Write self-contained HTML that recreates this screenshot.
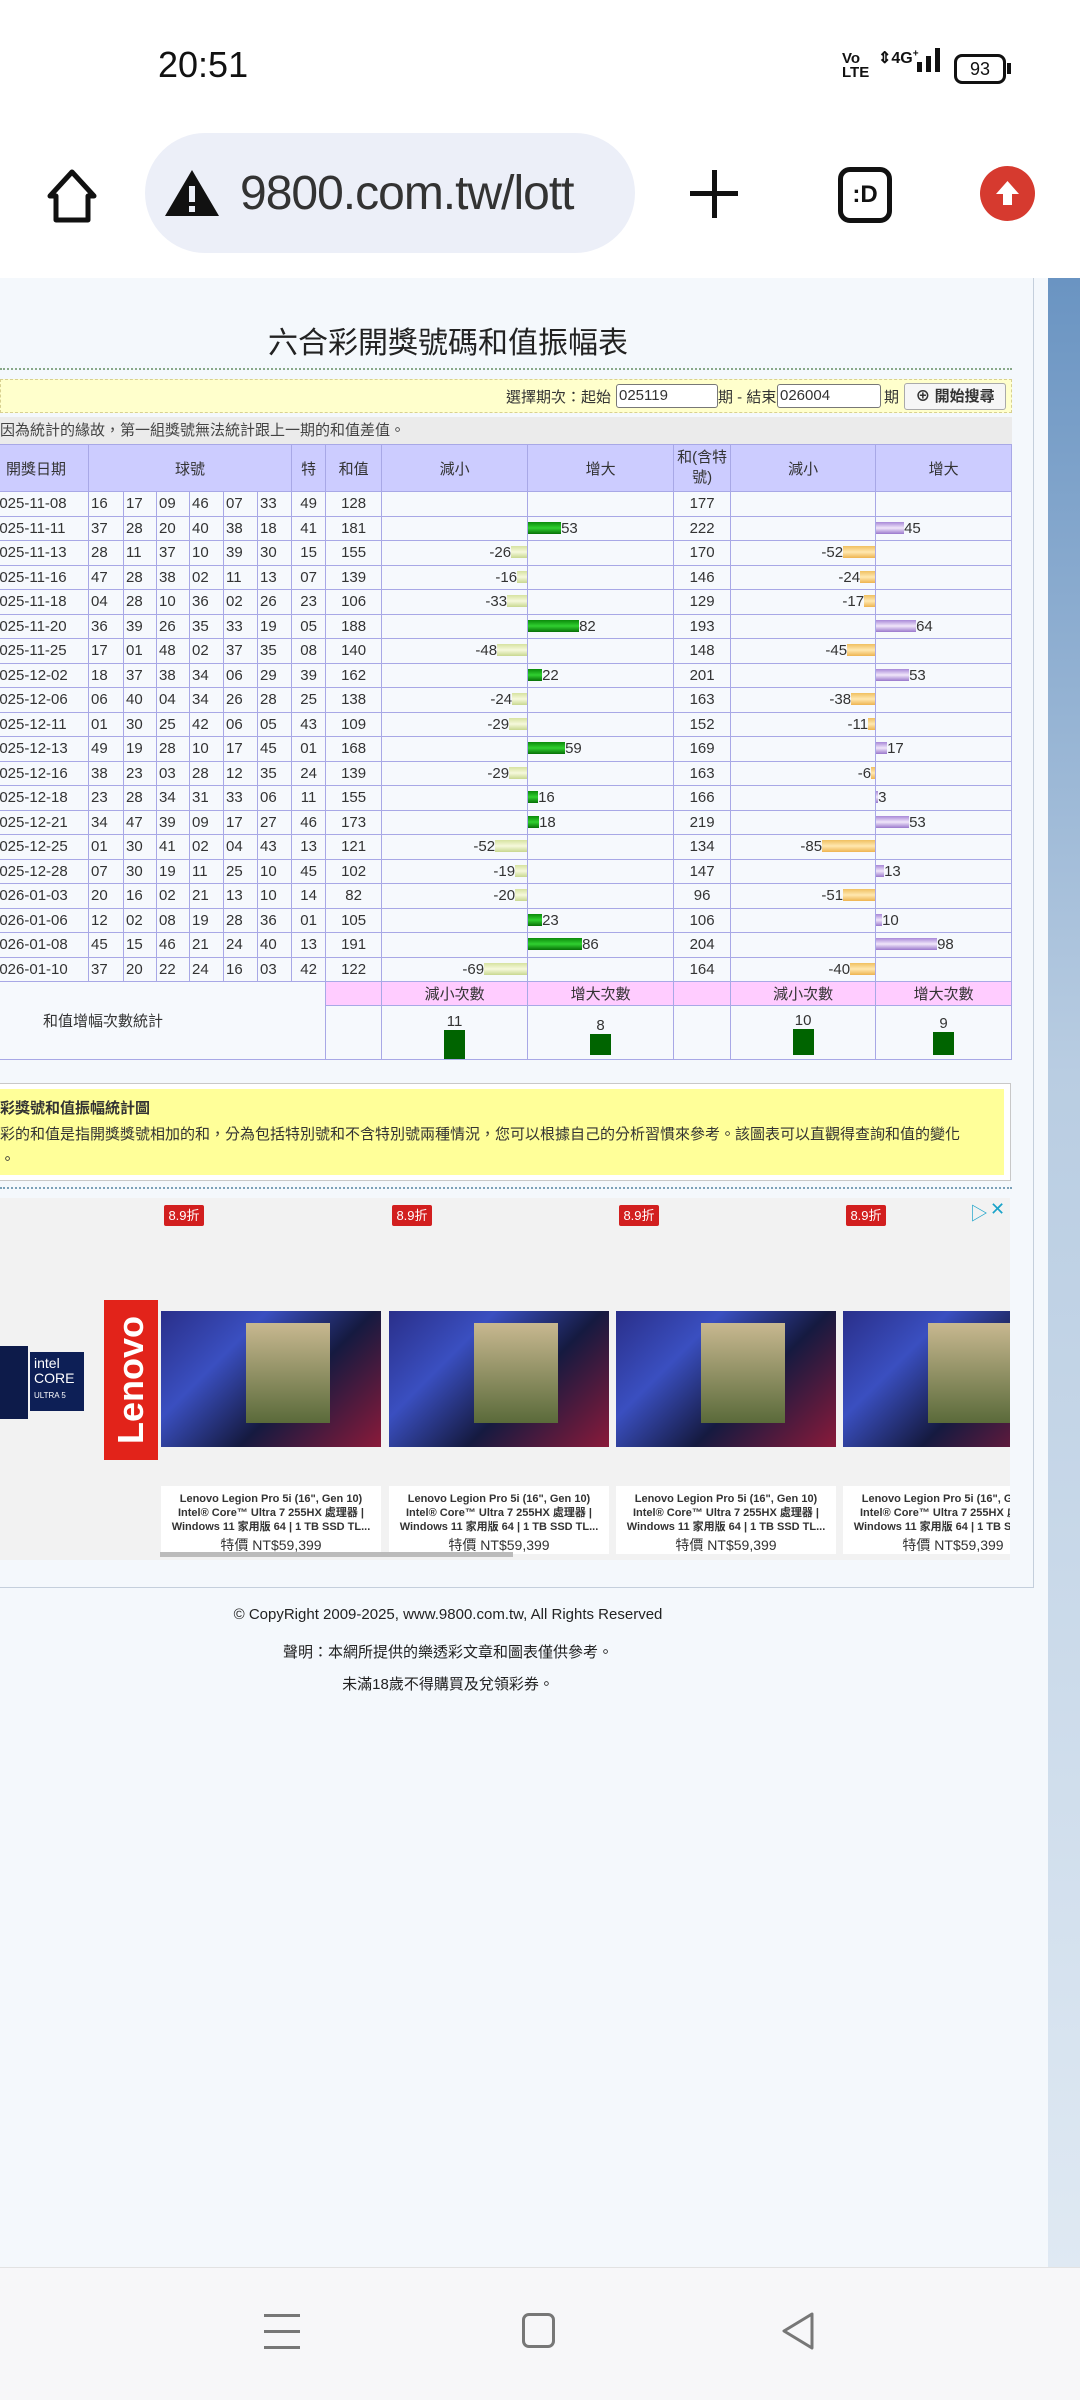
<!DOCTYPE html>
<html><head><meta charset="utf-8">
<style>
*{margin:0;padding:0;box-sizing:border-box}
body{width:1080px;height:2400px;position:relative;background:#fff;font-family:"Liberation Sans","Noto Sans CJK TC",sans-serif;overflow:hidden;color:#333}
.abs{position:absolute}
#page{position:absolute;left:0;top:278px;width:1080px;height:1989px;background:#f4f8fc}
#side{position:absolute;left:1048px;top:278px;width:32px;height:1989px;background:linear-gradient(#6a94c2,#b9cde2 40%,#dfe9f3)}
table{border-collapse:collapse;table-layout:fixed;position:absolute;left:-40px;top:444px;width:1051px;font-size:15px;color:#333}
td{border:1px solid #a8a8e6;text-align:center;white-space:nowrap;overflow:hidden;padding:0}
tr.h td{background:#ccccff;height:47px}
tr.r td{height:24.5px;background:#f6f9fd}
td.b{text-align:left;padding-left:2px}
td.dl{text-align:right;padding-right:0}
td.il{text-align:left}
.g,.y,.o,.p{display:inline-block;height:12px;vertical-align:-1px}
.g{background:linear-gradient(#0b8a0b,#30d030 50%,#067006)}
.y{background:linear-gradient(#d6e2a0,#f6f9dc 50%,#c8d890)}
.o{background:linear-gradient(#f0c060,#ffe8b0 50%,#eeb450)}
.p{background:linear-gradient(#a888d8,#f0e6fa 50%,#9a78cc)}
tr.sh td{background:#ffccff;height:24px}
tr.st td{height:54px;vertical-align:bottom;background:#f6f9fd}
.sb{display:inline-block;width:21px;background:#006400}
</style></head><body>
<!-- status bar -->
<div class="abs" style="left:158px;top:44px;font-size:36px;color:#111">20:51</div>
<div class="abs" style="left:842px;top:52px;font-size:15px;font-weight:bold;line-height:14px;color:#111">Vo<br>LTE</div>
<div class="abs" style="left:878px;top:48px;font-size:16px;font-weight:bold;color:#111">⇕4G<sup style="font-size:10px">+</sup></div>
<div class="abs" style="left:917px;top:62px;width:5px;height:10px;background:#111"></div>
<div class="abs" style="left:926px;top:56px;width:5px;height:16px;background:#111"></div>
<div class="abs" style="left:935px;top:48px;width:5px;height:24px;background:#111"></div>
<div class="abs" style="left:954px;top:54px;width:52px;height:30px;border:3px solid #111;border-radius:8px;font-size:18px;text-align:center;line-height:24px;color:#111">93</div>
<div class="abs" style="left:1007px;top:63px;width:4px;height:11px;background:#111"></div>
<!-- url bar -->
<svg class="abs" style="left:44px;top:168px" width="56" height="56" viewBox="0 0 56 56"><path d="M28 4 L6 28 L12 28 L12 52 L44 52 L44 28 L50 28 Z" fill="none" stroke="#111" stroke-width="5" stroke-linejoin="round"/></svg>
<div class="abs" style="left:145px;top:133px;width:490px;height:120px;border-radius:60px;background:#eceff8"></div>
<svg class="abs" style="left:163px;top:168px" width="58" height="50" viewBox="0 0 58 50"><path d="M29 2 L56 48 L2 48 Z" fill="#111"/><rect x="26" y="18" width="6" height="16" fill="#eceff8"/><rect x="26" y="38" width="6" height="6" fill="#eceff8"/></svg>
<div class="abs" style="left:240px;top:166px;font-size:48px;color:#333;letter-spacing:-1px">9800.com.tw/lott</div>
<div class="abs" style="left:690px;top:191px;width:48px;height:5px;background:#111"></div>
<div class="abs" style="left:712px;top:170px;width:5px;height:48px;background:#111"></div>
<div class="abs" style="left:838px;top:167px;width:54px;height:56px;border:5px solid #111;border-radius:12px;font-size:24px;font-weight:bold;text-align:center;line-height:46px;color:#111">:D</div>
<div class="abs" style="left:980px;top:166px;width:55px;height:55px;border-radius:50%;background:#d63a2f"></div>
<svg class="abs" style="left:990px;top:176px" width="35" height="35" viewBox="0 0 35 35"><path d="M17.5 5 L29 18 L22 18 L22 29 L13 29 L13 18 L6 18 Z" fill="#fff"/></svg>

<div id="page"></div>
<div id="side"></div>
<div class="abs" style="left:-2px;top:278px;width:1036px;height:1310px;border:1px solid #c4cfdc;border-top:none"></div>

<div class="abs" style="left:0;top:318px;width:896px;text-align:center;font-size:30px;color:#222">六合彩開獎號碼和值振幅表</div>
<div class="abs" style="left:0;top:368px;width:1012px;border-top:2px dotted #88a888"></div>
<div class="abs" style="left:0;top:379px;width:1012px;height:34px;background:#ffffcc;border:1px dashed #d8d090"></div>
<div class="abs" style="left:506px;top:386px;font-size:15px;color:#333;white-space:nowrap">選擇期次：起始</div>
<div class="abs" style="left:616px;top:384px;width:102px;height:24px;border:1px solid #777;border-radius:3px;background:#fff;font-size:15px;padding-left:2px;line-height:22px">025119</div>
<div class="abs" style="left:718px;top:386px;font-size:15px;color:#333">期 - 結束</div>
<div class="abs" style="left:777px;top:384px;width:104px;height:24px;border:1px solid #777;border-radius:3px;background:#fff;font-size:15px;padding-left:2px;line-height:22px">026004</div>
<div class="abs" style="left:884px;top:386px;font-size:15px;color:#333">期</div>
<div class="abs" style="left:904px;top:383px;width:102px;height:27px;border:1px solid #aaa;border-radius:3px;background:#f6f6f6;font-size:15px;font-weight:bold;text-align:center;line-height:25px">⊕ 開始搜尋</div>
<div class="abs" style="left:0;top:417px;width:1012px;height:27px;background:#ebebeb;font-size:15px;line-height:27px;color:#444">因為統計的緣故，第一組獎號無法統計跟上一期的和值差值。</div>

<table>
<colgroup><col style="width:128px"><col style="width:35px"><col style="width:33px"><col style="width:33px"><col style="width:34px"><col style="width:34px"><col style="width:34px"><col style="width:34px"><col style="width:56px"><col style="width:146px"><col style="width:146px"><col style="width:57px"><col style="width:145px"><col style="width:136px"></colgroup>
<tr class="h"><td style="text-align:right;padding-right:22px">開獎日期</td><td colspan="6">球號</td><td>特</td><td>和值</td><td>減小</td><td>增大</td><td style="white-space:normal;line-height:20px">和(含特號)</td><td>減小</td><td>增大</td></tr>
<tr class="r"><td class="b" style="padding-left:30px">2025-11-08</td><td class="b">16</td><td class="b">17</td><td class="b">09</td><td class="b">46</td><td class="b">07</td><td class="b">33</td><td>49</td><td>128</td><td></td><td></td><td>177</td><td></td><td></td></tr>
<tr class="r"><td class="b" style="padding-left:30px">2025-11-11</td><td class="b">37</td><td class="b">28</td><td class="b">20</td><td class="b">40</td><td class="b">38</td><td class="b">18</td><td>41</td><td>181</td><td></td><td class="il"><span class="g" style="width:33px"></span>53</td><td>222</td><td></td><td class="il"><span class="p" style="width:28px"></span>45</td></tr>
<tr class="r"><td class="b" style="padding-left:30px">2025-11-13</td><td class="b">28</td><td class="b">11</td><td class="b">37</td><td class="b">10</td><td class="b">39</td><td class="b">30</td><td>15</td><td>155</td><td class="dl">-26<span class="y" style="width:16px"></span></td><td></td><td>170</td><td class="dl">-52<span class="o" style="width:32px"></span></td><td></td></tr>
<tr class="r"><td class="b" style="padding-left:30px">2025-11-16</td><td class="b">47</td><td class="b">28</td><td class="b">38</td><td class="b">02</td><td class="b">11</td><td class="b">13</td><td>07</td><td>139</td><td class="dl">-16<span class="y" style="width:10px"></span></td><td></td><td>146</td><td class="dl">-24<span class="o" style="width:15px"></span></td><td></td></tr>
<tr class="r"><td class="b" style="padding-left:30px">2025-11-18</td><td class="b">04</td><td class="b">28</td><td class="b">10</td><td class="b">36</td><td class="b">02</td><td class="b">26</td><td>23</td><td>106</td><td class="dl">-33<span class="y" style="width:20px"></span></td><td></td><td>129</td><td class="dl">-17<span class="o" style="width:11px"></span></td><td></td></tr>
<tr class="r"><td class="b" style="padding-left:30px">2025-11-20</td><td class="b">36</td><td class="b">39</td><td class="b">26</td><td class="b">35</td><td class="b">33</td><td class="b">19</td><td>05</td><td>188</td><td></td><td class="il"><span class="g" style="width:51px"></span>82</td><td>193</td><td></td><td class="il"><span class="p" style="width:40px"></span>64</td></tr>
<tr class="r"><td class="b" style="padding-left:30px">2025-11-25</td><td class="b">17</td><td class="b">01</td><td class="b">48</td><td class="b">02</td><td class="b">37</td><td class="b">35</td><td>08</td><td>140</td><td class="dl">-48<span class="y" style="width:30px"></span></td><td></td><td>148</td><td class="dl">-45<span class="o" style="width:28px"></span></td><td></td></tr>
<tr class="r"><td class="b" style="padding-left:30px">2025-12-02</td><td class="b">18</td><td class="b">37</td><td class="b">38</td><td class="b">34</td><td class="b">06</td><td class="b">29</td><td>39</td><td>162</td><td></td><td class="il"><span class="g" style="width:14px"></span>22</td><td>201</td><td></td><td class="il"><span class="p" style="width:33px"></span>53</td></tr>
<tr class="r"><td class="b" style="padding-left:30px">2025-12-06</td><td class="b">06</td><td class="b">40</td><td class="b">04</td><td class="b">34</td><td class="b">26</td><td class="b">28</td><td>25</td><td>138</td><td class="dl">-24<span class="y" style="width:15px"></span></td><td></td><td>163</td><td class="dl">-38<span class="o" style="width:24px"></span></td><td></td></tr>
<tr class="r"><td class="b" style="padding-left:30px">2025-12-11</td><td class="b">01</td><td class="b">30</td><td class="b">25</td><td class="b">42</td><td class="b">06</td><td class="b">05</td><td>43</td><td>109</td><td class="dl">-29<span class="y" style="width:18px"></span></td><td></td><td>152</td><td class="dl">-11<span class="o" style="width:7px"></span></td><td></td></tr>
<tr class="r"><td class="b" style="padding-left:30px">2025-12-13</td><td class="b">49</td><td class="b">19</td><td class="b">28</td><td class="b">10</td><td class="b">17</td><td class="b">45</td><td>01</td><td>168</td><td></td><td class="il"><span class="g" style="width:37px"></span>59</td><td>169</td><td></td><td class="il"><span class="p" style="width:11px"></span>17</td></tr>
<tr class="r"><td class="b" style="padding-left:30px">2025-12-16</td><td class="b">38</td><td class="b">23</td><td class="b">03</td><td class="b">28</td><td class="b">12</td><td class="b">35</td><td>24</td><td>139</td><td class="dl">-29<span class="y" style="width:18px"></span></td><td></td><td>163</td><td class="dl">-6<span class="o" style="width:4px"></span></td><td></td></tr>
<tr class="r"><td class="b" style="padding-left:30px">2025-12-18</td><td class="b">23</td><td class="b">28</td><td class="b">34</td><td class="b">31</td><td class="b">33</td><td class="b">06</td><td>11</td><td>155</td><td></td><td class="il"><span class="g" style="width:10px"></span>16</td><td>166</td><td></td><td class="il"><span class="p" style="width:2px"></span>3</td></tr>
<tr class="r"><td class="b" style="padding-left:30px">2025-12-21</td><td class="b">34</td><td class="b">47</td><td class="b">39</td><td class="b">09</td><td class="b">17</td><td class="b">27</td><td>46</td><td>173</td><td></td><td class="il"><span class="g" style="width:11px"></span>18</td><td>219</td><td></td><td class="il"><span class="p" style="width:33px"></span>53</td></tr>
<tr class="r"><td class="b" style="padding-left:30px">2025-12-25</td><td class="b">01</td><td class="b">30</td><td class="b">41</td><td class="b">02</td><td class="b">04</td><td class="b">43</td><td>13</td><td>121</td><td class="dl">-52<span class="y" style="width:32px"></span></td><td></td><td>134</td><td class="dl">-85<span class="o" style="width:53px"></span></td><td></td></tr>
<tr class="r"><td class="b" style="padding-left:30px">2025-12-28</td><td class="b">07</td><td class="b">30</td><td class="b">19</td><td class="b">11</td><td class="b">25</td><td class="b">10</td><td>45</td><td>102</td><td class="dl">-19<span class="y" style="width:12px"></span></td><td></td><td>147</td><td></td><td class="il"><span class="p" style="width:8px"></span>13</td></tr>
<tr class="r"><td class="b" style="padding-left:30px">2026-01-03</td><td class="b">20</td><td class="b">16</td><td class="b">02</td><td class="b">21</td><td class="b">13</td><td class="b">10</td><td>14</td><td>82</td><td class="dl">-20<span class="y" style="width:12px"></span></td><td></td><td>96</td><td class="dl">-51<span class="o" style="width:32px"></span></td><td></td></tr>
<tr class="r"><td class="b" style="padding-left:30px">2026-01-06</td><td class="b">12</td><td class="b">02</td><td class="b">08</td><td class="b">19</td><td class="b">28</td><td class="b">36</td><td>01</td><td>105</td><td></td><td class="il"><span class="g" style="width:14px"></span>23</td><td>106</td><td></td><td class="il"><span class="p" style="width:6px"></span>10</td></tr>
<tr class="r"><td class="b" style="padding-left:30px">2026-01-08</td><td class="b">45</td><td class="b">15</td><td class="b">46</td><td class="b">21</td><td class="b">24</td><td class="b">40</td><td>13</td><td>191</td><td></td><td class="il"><span class="g" style="width:54px"></span>86</td><td>204</td><td></td><td class="il"><span class="p" style="width:61px"></span>98</td></tr>
<tr class="r"><td class="b" style="padding-left:30px">2026-01-10</td><td class="b">37</td><td class="b">20</td><td class="b">22</td><td class="b">24</td><td class="b">16</td><td class="b">03</td><td>42</td><td>122</td><td class="dl">-69<span class="y" style="width:43px"></span></td><td></td><td>164</td><td class="dl">-40<span class="o" style="width:25px"></span></td><td></td></tr>
<tr class="sh"><td colspan="8" rowspan="2" style="background:#f6f9fd;vertical-align:middle;text-align:left;padding-left:82px">和值增幅次數統計</td><td></td><td>減小次數</td><td>增大次數</td><td></td><td>減小次數</td><td>增大次數</td></tr>
<tr class="st"><td></td><td>11<br><span class="sb" style="height:29px;vertical-align:bottom"></span></td><td>8<br><span class="sb" style="height:21px"></span></td><td></td><td>10<br><span class="sb" style="height:26px"></span></td><td>9<br><span class="sb" style="height:23px"></span></td></tr>
</table>

<!-- note box -->
<div class="abs" style="left:-2px;top:1083px;width:1013px;height:98px;border:1px solid #c8c8c8;background:#fff"></div>
<div class="abs" style="left:0;top:1089px;width:1004px;height:86px;background:#ffff99"></div>
<div class="abs" style="left:0;top:1097px;font-size:15px;font-weight:bold;color:#333;white-space:nowrap">彩獎號和值振幅統計圖</div>
<div class="abs" style="left:0;top:1123px;font-size:15px;color:#333;white-space:nowrap">彩的和值是指開獎獎號相加的和，分為包括特別號和不含特別號兩種情況，您可以根據自己的分析習慣來參考。該圖表可以直觀得查詢和值的變化</div>
<div class="abs" style="left:0;top:1148px;font-size:15px;color:#333">。</div>
<div class="abs" style="left:0;top:1187px;width:1012px;border-top:2px dotted #7aa0b8"></div>

<!-- ad -->
<div class="abs" style="left:0;top:1198px;width:1010px;height:362px;background:#f2f2f2;overflow:hidden">
  <div class="abs" style="left:164px;top:7px;width:40px;height:21px;background:#d21f1f;color:#fff;font-size:13px;text-align:center;line-height:21px;border-radius:2px">8.9折</div>
  <div class="abs" style="left:392px;top:7px;width:40px;height:21px;background:#d21f1f;color:#fff;font-size:13px;text-align:center;line-height:21px;border-radius:2px">8.9折</div>
  <div class="abs" style="left:619px;top:7px;width:40px;height:21px;background:#d21f1f;color:#fff;font-size:13px;text-align:center;line-height:21px;border-radius:2px">8.9折</div>
  <div class="abs" style="left:846px;top:7px;width:40px;height:21px;background:#d21f1f;color:#fff;font-size:13px;text-align:center;line-height:21px;border-radius:2px">8.9折</div>
  <div class="abs" style="left:970px;top:2px;color:#1aa3c9;font-size:18px">▷</div>
  <div class="abs" style="left:990px;top:1px;color:#1aa3c9;font-size:18px">✕</div>
  <div class="abs" style="left:0;top:148px;width:28px;height:73px;background:#0d1b4a"></div>
  <div class="abs" style="left:30px;top:154px;width:54px;height:59px;background:#0d1f56;color:#fff;font-size:14px;line-height:15px;padding:4px">intel<br>CORE<br><span style="font-size:8px">ULTRA 5</span></div>
  <div class="abs" style="left:104px;top:102px;width:54px;height:160px;background:#e2231a"></div>
  <div class="abs" style="left:131px;top:182px;transform:translate(-50%,-50%) rotate(-90deg);color:#fff;font-size:36px;font-weight:bold;white-space:nowrap">Lenovo</div>
  <div class="abs" style="left:161px;top:113px;width:220px;height:136px;background:linear-gradient(135deg,#2a2f8a,#3a4fc0 30%,#151a40 60%,#8a1a3a)"></div>
  <div class="abs" style="left:389px;top:113px;width:220px;height:136px;background:linear-gradient(135deg,#2a2f8a,#3a4fc0 30%,#151a40 60%,#8a1a3a)"></div>
  <div class="abs" style="left:616px;top:113px;width:220px;height:136px;background:linear-gradient(135deg,#2a2f8a,#3a4fc0 30%,#151a40 60%,#8a1a3a)"></div>
  <div class="abs" style="left:843px;top:113px;width:220px;height:136px;background:linear-gradient(135deg,#2a2f8a,#3a4fc0 30%,#151a40 60%,#8a1a3a)"></div>
  <div class="abs" style="left:246px;top:125px;width:84px;height:100px;background:linear-gradient(#c8b890,#5a6a3a)"></div>
  <div class="abs" style="left:474px;top:125px;width:84px;height:100px;background:linear-gradient(#c8b890,#5a6a3a)"></div>
  <div class="abs" style="left:701px;top:125px;width:84px;height:100px;background:linear-gradient(#c8b890,#5a6a3a)"></div>
  <div class="abs" style="left:928px;top:125px;width:84px;height:100px;background:linear-gradient(#c8b890,#5a6a3a)"></div>
  <div class="abs" style="left:161px;top:288px;width:220px;height:68px;background:#fff;font-size:11px;font-weight:bold;text-align:center;line-height:14px;padding-top:6px;color:#333">Lenovo Legion Pro 5i (16", Gen 10)<br>Intel® Core™ Ultra 7 255HX 處理器 |<br>Windows 11 家用版 64 | 1 TB SSD TL...<br><span style="font-weight:normal;font-size:14px;line-height:22px">特價 NT$59,399</span></div>
  <div class="abs" style="left:389px;top:288px;width:220px;height:68px;background:#fff;font-size:11px;font-weight:bold;text-align:center;line-height:14px;padding-top:6px;color:#333">Lenovo Legion Pro 5i (16", Gen 10)<br>Intel® Core™ Ultra 7 255HX 處理器 |<br>Windows 11 家用版 64 | 1 TB SSD TL...<br><span style="font-weight:normal;font-size:14px;line-height:22px">特價 NT$59,399</span></div>
  <div class="abs" style="left:616px;top:288px;width:220px;height:68px;background:#fff;font-size:11px;font-weight:bold;text-align:center;line-height:14px;padding-top:6px;color:#333">Lenovo Legion Pro 5i (16", Gen 10)<br>Intel® Core™ Ultra 7 255HX 處理器 |<br>Windows 11 家用版 64 | 1 TB SSD TL...<br><span style="font-weight:normal;font-size:14px;line-height:22px">特價 NT$59,399</span></div>
  <div class="abs" style="left:843px;top:288px;width:220px;height:68px;background:#fff;font-size:11px;font-weight:bold;text-align:center;line-height:14px;padding-top:6px;color:#333;white-space:nowrap">Lenovo Legion Pro 5i (16", Gen 10)<br>Intel® Core™ Ultra 7 255HX 處理器 |<br>Windows 11 家用版 64 | 1 TB SSD TL...<br><span style="font-weight:normal;font-size:14px;line-height:22px">特價 NT$59,399</span></div>
  <div class="abs" style="left:160px;top:354px;width:353px;height:5px;background:#bbb"></div>
</div>

<!-- footer -->
<div class="abs" style="left:0;top:1606px;width:896px;text-align:center;font-size:15px;color:#222">© CopyRight 2009-2025, www.9800.com.tw, All Rights Reserved</div>
<div class="abs" style="left:0;top:1641px;width:896px;text-align:center;font-size:15px;color:#222">聲明：本網所提供的樂透彩文章和圖表僅供參考。</div>
<div class="abs" style="left:0;top:1673px;width:896px;text-align:center;font-size:15px;color:#222">未滿18歲不得購買及兌領彩券。</div>

<!-- nav bar -->
<div class="abs" style="left:0;top:2267px;width:1080px;height:133px;background:#f7f7f9;border-top:1px solid #e2e2e2"></div>
<div class="abs" style="left:264px;top:2314px;width:36px;height:3px;background:#777"></div>
<div class="abs" style="left:264px;top:2330px;width:36px;height:3px;background:#777"></div>
<div class="abs" style="left:264px;top:2346px;width:36px;height:3px;background:#777"></div>
<div class="abs" style="left:522px;top:2313px;width:33px;height:35px;border:3px solid #777;border-radius:7px"></div>
<svg class="abs" style="left:780px;top:2311px" width="36" height="40" viewBox="0 0 36 40"><path d="M32 3 L4 20 L32 37 Z" fill="none" stroke="#777" stroke-width="3" stroke-linejoin="round"/></svg>
</body></html>
